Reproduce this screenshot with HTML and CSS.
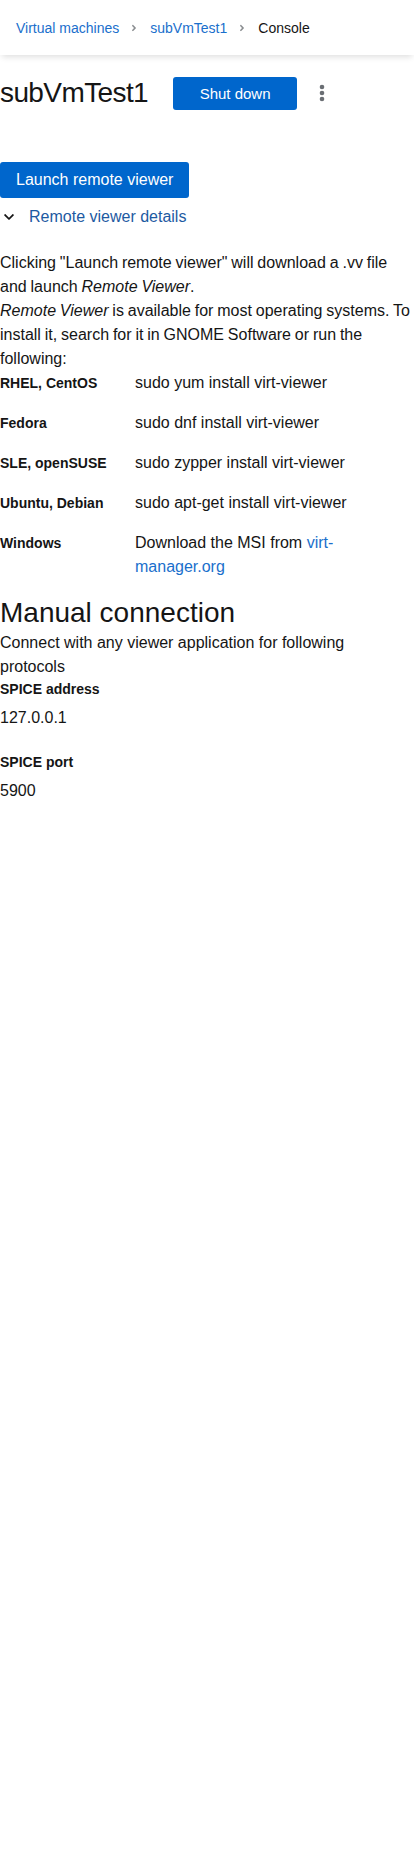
FILE: index.html
```html
<!DOCTYPE html>
<html lang="en">
<head>
<meta charset="utf-8">
<title>subVmTest1 - Console</title>
<link rel="stylesheet" href="styles.css">
</head>
<body>
<header class="topbar">
  <nav class="breadcrumb">
    <a class="crumb-link" href="#">Virtual machines</a>
    <span class="crumb-sep"><svg viewBox="0 0 256 512" width="6" height="10"><path fill="currentColor" d="M224.3 273l-136 136c-9.4 9.4-24.6 9.4-33.9 0l-22.6-22.6c-9.4-9.4-9.4-24.6 0-33.9l96.4-96.4-96.4-96.4c-9.4-9.4-9.4-24.6 0-33.9L54.3 103c9.4-9.4 24.6-9.4 33.9 0l136 136c9.5 9.4 9.5 24.6.1 34z"/></svg></span>
    <a class="crumb-link" href="#">subVmTest1</a>
    <span class="crumb-sep"><svg viewBox="0 0 256 512" width="6" height="10"><path fill="currentColor" d="M224.3 273l-136 136c-9.4 9.4-24.6 9.4-33.9 0l-22.6-22.6c-9.4-9.4-9.4-24.6 0-33.9l96.4-96.4-96.4-96.4c-9.4-9.4-9.4-24.6 0-33.9L54.3 103c9.4-9.4 24.6-9.4 33.9 0l136 136c9.5 9.4 9.5 24.6.1 34z"/></svg></span>
    <span class="crumb-current">Console</span>
  </nav>
</header>

<main class="page">
  <div class="title-row">
    <h1 class="vm-title">subVmTest1</h1>
    <button class="btn btn-primary btn-shutdown">Shut down</button>
    <button class="kebab" aria-label="Actions">
      <svg viewBox="0 0 6 18" width="6" height="18"><circle cx="3" cy="3" r="2.3" fill="currentColor"/><circle cx="3" cy="9" r="2.3" fill="currentColor"/><circle cx="3" cy="15" r="2.3" fill="currentColor"/></svg>
    </button>
  </div>

  <section class="remote">
    <button class="btn btn-primary btn-launch">Launch remote viewer</button>
    <div class="toggle">
      <svg class="toggle-icon" viewBox="0 0 448 512" width="10" height="12"><path fill="currentColor" d="M207.029 381.476L12.686 187.132c-9.373-9.373-9.373-24.569 0-33.941l22.667-22.667c9.357-9.357 24.522-9.375 33.901-.04L224 284.505l154.745-154.021c9.379-9.335 24.544-9.317 33.901.04l22.667 22.667c9.373 9.373 9.373 24.569 0 33.941L240.971 381.476c-9.373 9.372-24.569 9.372-33.942 0z"/></svg>
      <span class="toggle-text">Remote viewer details</span>
    </div>

    <div class="details">
      <p class="para para-tight">Clicking "Launch remote viewer" will download a .vv file and launch <em>Remote Viewer</em>.</p>
      <p class="para para-tight"><em>Remote Viewer</em> is available for most operating systems. To install it, search for it in GNOME Software or run the following:</p>
      <dl class="os-list">
        <dt>RHEL, CentOS</dt><dd>sudo yum install virt-viewer</dd>
        <dt>Fedora</dt><dd>sudo dnf install virt-viewer</dd>
        <dt>SLE, openSUSE</dt><dd>sudo zypper install virt-viewer</dd>
        <dt>Ubuntu, Debian</dt><dd>sudo apt-get install virt-viewer</dd>
        <dt>Windows</dt><dd>Download the MSI from <a href="#" class="link">virt-manager.org</a></dd>
      </dl>
    </div>
  </section>

  <section class="manual">
    <h2 class="manual-title">Manual connection</h2>
    <p class="para manual-desc">Connect with any viewer application for following protocols</p>
    <dl class="conn">
      <dt>SPICE address</dt>
      <dd>127.0.0.1</dd>
      <dt>SPICE port</dt>
      <dd>5900</dd>
    </dl>
  </section>
</main>
</body>
</html>
```

FILE: styles.css
```css
* { box-sizing: border-box; }

html, body {
  margin: 0;
  padding: 0;
  background: #ffffff;
}

body {
  font-family: "Liberation Sans", Arial, sans-serif;
  color: #151515;
  font-size: 16px;
  line-height: 1.5;
}

a { text-decoration: none; }

.topbar {
  height: 55px;
  background: #fff;
  box-shadow: 0 4px 6px -2px rgba(3, 3, 3, 0.13);
  display: flex;
  align-items: center;
  padding: 0 16px;
  position: relative;
}

.breadcrumb {
  display: flex;
  align-items: center;
  font-size: 14px;
  line-height: 21px;
  margin-top: 1px;
}

.crumb-link { color: #1a6fcc; }
.crumb-current { color: #151515; }

.crumb-sep {
  color: #8a8d90;
  display: flex;
  align-items: center;
  margin: 0 13px 0 12px;
}

.title-row {
  display: flex;
  align-items: center;
  height: 76px;
}

.vm-title {
  margin: 0;
  font-size: 28px;
  font-weight: 400;
  line-height: 36px;
  color: #151515;
  letter-spacing: -0.6px;
}

.btn {
  font-family: inherit;
  border: 0;
  border-radius: 3px;
  cursor: pointer;
}

.btn-primary {
  background: #0066cc;
  color: #fff;
}

.btn-shutdown {
  margin-left: 25px;
  width: 124px;
  height: 33px;
  font-size: 15px;
  padding: 0;
}

.kebab {
  background: none;
  border: 0;
  color: #6a6e73;
  margin-left: 22px;
  padding: 0;
  display: flex;
  align-items: center;
}

.remote {
  padding-top: 31px;
}

.btn-launch {
  font-size: 16px;
  line-height: 24px;
  padding: 6px 16px;
  height: 36px;
  white-space: nowrap;
  display: block;
}

.toggle {
  display: flex;
  align-items: center;
  height: 24px;
  margin-top: 7px;
  color: #1d5aa2;
}

.toggle-icon {
  color: #151515;
  margin-left: 4px;
  margin-right: 15px;
}

.toggle-text {
  font-size: 16px;
  line-height: 24px;
}

.details {
  padding-top: 22px;
}

.para {
  margin: 0;
  font-size: 16px;
  line-height: 24px;
}

.para-tight {
  word-spacing: -0.6px;
}

.os-list {
  margin: 0;
  display: grid;
  grid-template-columns: 135px 1fr;
  row-gap: 16px;
}

.os-list dt {
  font-weight: 700;
  font-size: 14px;
  line-height: 24px;
}

.os-list dd {
  margin: 0;
  font-size: 16px;
  line-height: 24px;
}

.link { color: #1a6fcc; }

.manual {
  padding-top: 16px;
}

.manual-title {
  margin: 0;
  font-size: 28px;
  font-weight: 400;
  line-height: 36px;
}

.manual-desc {
  max-width: 360px;
}

.conn {
  margin: 0;
}

.conn dt {
  font-weight: 700;
  font-size: 14px;
  line-height: 21px;
}

.conn dd {
  margin: 0;
  padding-top: 6px;
  font-size: 16px;
  line-height: 24px;
}

.conn dd + dt {
  margin-top: 22px;
}
```
